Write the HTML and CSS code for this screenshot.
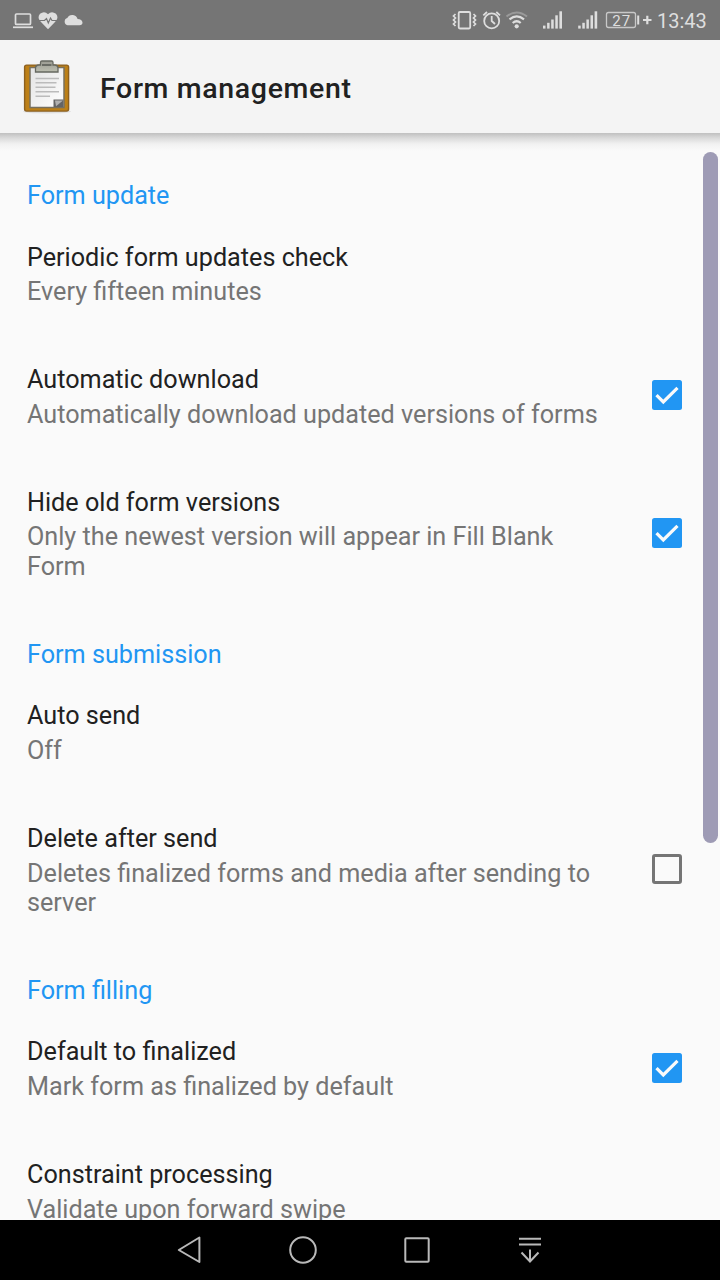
FILE: index.html
```html
<!DOCTYPE html>
<html lang="en">
<head>
<meta charset="utf-8">
<title>Form management</title>
<link rel="stylesheet" href="styles.css">
</head>
<body>
<div class="screen">
  <div class="status">
    <svg class="status-left" width="90" height="40" viewBox="0 0 90 40">
      <g fill="none" stroke="#dedede" stroke-width="1.700">
        <rect x="15.500" y="14" width="15" height="10.400" rx="1"/>
        <path d="M13 27.300H33"/>
      </g>
      <path d="M48 29.300L41 22Q36.700 17.500 40 13.800Q44.500 10.500 48 14.300Q51.500 10.500 56 13.800Q59.300 17.500 55 22Z" fill="#dedede"/>
      <path d="M38.500 20.500H44.500L46.500 18.500L48.300 23L50.500 18L52 20.500H57.500" fill="none" stroke="#757575" stroke-width="1.200"/>
      <path d="M67.500 25.200A3.800 3.800 0 0 1 67.300 17.900Q69 14.500 73 15Q76.600 15.500 77.600 19Q82 19 82.500 22.500Q82.500 25.200 79.500 25.200Z" fill="#dedede"/>
    </svg>
    <svg class="status-right" width="206" height="40" viewBox="446 0 206 40">
      <g fill="none" stroke="#dedede" stroke-width="1.800">
        <rect x="458.700" y="12" width="11.500" height="16.500" rx="1.200"/>
        <path d="M455.500 14L453.500 16L455.500 18L453.500 20L455.500 22L453.500 24L455.500 26M473.500 14L475.500 16L473.500 18L475.500 20L473.500 22L475.500 24L473.500 26" stroke-width="1.700"/>
        <circle cx="491.700" cy="20.900" r="7.500"/>
        <path d="M491.700 16V21L495 24M483.300 15.300L487 12M500 15.300L496.300 12"/>
        <path d="M506.500 16.500Q516.500 8.500 527 16.500" stroke="#9a9a9a" stroke-width="2"/>
        <path d="M509.500 19.300Q516.700 13.500 524 19.300M512.700 23Q516.700 19.500 520.700 23" stroke-width="2.200"/>
      </g>
      <circle cx="516.700" cy="26.300" r="2.100" fill="#dedede"/>
      <g id="signal" fill="#dedede">
        <rect x="543" y="25.600" width="2.500" height="3"/>
        <rect x="547.100" y="22.800" width="2.500" height="5.800"/>
        <rect x="551.200" y="19.500" width="2.500" height="9.100"/>
        <rect x="555.300" y="15.300" width="2.500" height="13.300"/>
        <rect x="559.400" y="11.300" width="2.600" height="17.300"/>
      </g>
      <use href="#signal" x="35.200"/>
      <rect x="606.500" y="12.500" width="29" height="15" rx="2" fill="none" stroke="#c8c8c8" stroke-width="1.300"/>
      <text class="battery" x="612.300" y="25.500" textLength="18">27</text>
      <path d="M638.200 15.500V24.500" stroke="#dedede" stroke-width="2"/>
      <path d="M643 20H651.500M647.300 15.800V24.300" stroke="#dedede" stroke-width="2.200"/>
    </svg>
    <span class="clock">13:43</span>
  </div>

  <header class="toolbar">
    <svg class="logo" width="50" height="56" viewBox="22 58.500 50 56">
      <defs>
        <linearGradient id="paper" x1="0" y1="0" x2="1" y2="1"><stop offset="0" stop-color="#e3e3e3"/><stop offset="1" stop-color="#fff"/></linearGradient>
        <linearGradient id="clip" x1="0" y1="0" x2="0" y2="1"><stop offset="0" stop-color="#9b9b92"/><stop offset="1" stop-color="#bcbeb0"/></linearGradient>
      </defs>
      <ellipse cx="47" cy="111" rx="24" ry="2" fill="#dedede"/>
      <rect x="24.600" y="64.600" width="44" height="46" rx="2" fill="#bd8017" stroke="#8c6020" stroke-width="1.400"/>
      <path d="M30 67H64V107H30Z" fill="url(#paper)" stroke="#77705f" stroke-width="1.500"/>
      <path d="M53.500 99H63.500V106.500H53.500Z" fill="#646464"/>
      <path d="M55 100H63L56 105.700Z" fill="#b0b0b0"/>
      <path d="M35.500 78H59M35.500 82.300H56.500M35.500 86.700H55.500M35.500 91.200H59M35.500 95.700H50" stroke="#bbb" stroke-width="1.600"/>
      <path d="M35.500 71.500V68Q35.500 64.500 39 64.500H40.500V62Q40.500 60.500 42 60.500H51.500Q53 60.500 53 62V64.500H54.500Q58 64.500 58 68V71.500Z" fill="url(#clip)" stroke="#666860" stroke-width="1.300"/>
      <path d="M42 64.500H51.500" stroke="#6a6c65" stroke-width="2"/>
    </svg>
    <h1 class="title">Form management</h1>
  </header>

  <main class="list">
    <h2 class="section">Form update</h2>
    <div class="row"><div class="copy"><div class="name">Periodic form updates check</div><div class="summary">Every fifteen minutes</div></div></div>
    <div class="row"><div class="copy"><div class="name">Automatic download</div><div class="summary">Automatically download updated versions of forms</div></div>
      <svg class="box" width="32" height="32" viewBox="0 0 32 32"><rect x="1" y="1" width="30" height="30" rx="2.500" fill="#2196f3"/><path d="M5.500 16.200L12.300 23L26.500 8.800" fill="none" stroke="#fafafa" stroke-width="3.200"/></svg></div>
    <div class="row"><div class="copy"><div class="name">Hide old form versions</div><div class="summary">Only the newest version will appear in Fill Blank<br>Form</div></div>
      <svg class="box" width="32" height="32" viewBox="0 0 32 32"><rect x="1" y="1" width="30" height="30" rx="2.500" fill="#2196f3"/><path d="M5.500 16.200L12.300 23L26.500 8.800" fill="none" stroke="#fafafa" stroke-width="3.200"/></svg></div>
    <h2 class="section">Form submission</h2>
    <div class="row"><div class="copy"><div class="name">Auto send</div><div class="summary">Off</div></div></div>
    <div class="row"><div class="copy"><div class="name">Delete after send</div><div class="summary">Deletes finalized forms and media after sending to<br>server</div></div>
      <svg class="box" width="32" height="32" viewBox="0 0 32 32"><rect x="2.500" y="2.500" width="27" height="27" rx="1.500" fill="none" stroke="#757575" stroke-width="3"/></svg></div>
    <h2 class="section">Form filling</h2>
    <div class="row"><div class="copy"><div class="name">Default to finalized</div><div class="summary">Mark form as finalized by default</div></div>
      <svg class="box" width="32" height="32" viewBox="0 0 32 32"><rect x="1" y="1" width="30" height="30" rx="2.500" fill="#2196f3"/><path d="M5.500 16.200L12.300 23L26.500 8.800" fill="none" stroke="#fafafa" stroke-width="3.200"/></svg></div>
    <div class="row"><div class="copy"><div class="name">Constraint processing</div><div class="summary">Validate upon forward swipe</div></div></div>
    <div class="scrollbar"></div>
  </main>

  <nav class="navbar">
    <svg width="30" height="32" viewBox="0 0 30 32"><path d="M24.400 3.500V28L3.800 16Z" fill="none" stroke="#b9b9b9" stroke-width="2" stroke-linejoin="round"/></svg>
    <svg width="30" height="32" viewBox="0 0 30 32"><circle cx="15" cy="16" r="12.800" fill="none" stroke="#b9b9b9" stroke-width="2"/></svg>
    <svg width="30" height="32" viewBox="0 0 30 32"><rect x="3.300" y="4.300" width="23.400" height="23.400" rx="1" fill="none" stroke="#b9b9b9" stroke-width="2"/></svg>
    <svg width="30" height="32" viewBox="0 0 30 32"><path d="M4 4.800H26M4 10.400H26M15 15.500V27.500M6.500 18.500L15 27.500L23.500 18.500" fill="none" stroke="#b9b9b9" stroke-width="2"/></svg>
  </nav>
</div>
</body>
</html>
```
FILE: styles.css
```css
* { box-sizing: border-box; }
body { margin: 0; font-family: Roboto, sans-serif; }
.screen {
  width: 720px;
  height: 1280px;
  display: flex;
  flex-direction: column;
  overflow: hidden;
  background: #fafafa;
}
.status {
  flex: none;
  height: 40px;
  display: flex;
  background: #757575;
  color: #dedede;
}
.status-left { margin-right: auto; }
.battery { font: 15px Roboto, sans-serif; fill: #dedede; }
.clock {
  width: 68px;
  padding-left: 5px;
  font-size: 20px;
  line-height: 42px;
  white-space: nowrap;
}
.toolbar {
  flex: none;
  height: 93px;
  display: flex;
  align-items: center;
  gap: 28px;
  padding: 0 22px;
  background: #f4f4f4;
}
.title {
  margin: 5px 0 0;
  font-size: 28.5px;
  font-weight: 500;
  line-height: 34px;
  letter-spacing: 0.65px;
  color: #212121;
}
.list {
  position: relative;
  flex: 1;
  min-height: 0;
  padding-top: 17.8px;
  overflow: hidden;
  background: linear-gradient(#c0c0c0, #dadada 5px, #f1f1f1 11px, #fafafa 18px) no-repeat 0 0 / 100% 18px;
}
.section {
  height: 61.5px;
  margin: 0;
  padding: 30.3px 27px 0;
  font-size: 25.2px;
  font-weight: 400;
  line-height: 29.4px;
  color: #2196f3;
}
.row {
  display: flex;
  align-items: center;
  justify-content: space-between;
  padding: 0 37.5px 0 27px;
  font-size: 25.2px;
  line-height: 29.4px;
  white-space: nowrap;
}
.copy { padding: 30.3px 0 28.2px; }
.name { margin-bottom: 5.3px; color: #212121; }
.summary { color: #757575; }
.box { flex: none; margin-top: -1.5px; }
.scrollbar {
  position: absolute;
  top: 19px;
  right: 2px;
  width: 15px;
  height: 691px;
  border-radius: 8px;
  background: #9e9bb5;
}
.navbar {
  flex: none;
  height: 60px;
  display: flex;
  align-items: center;
  justify-content: center;
  gap: 83.5px;
  background: #000;
}
```
